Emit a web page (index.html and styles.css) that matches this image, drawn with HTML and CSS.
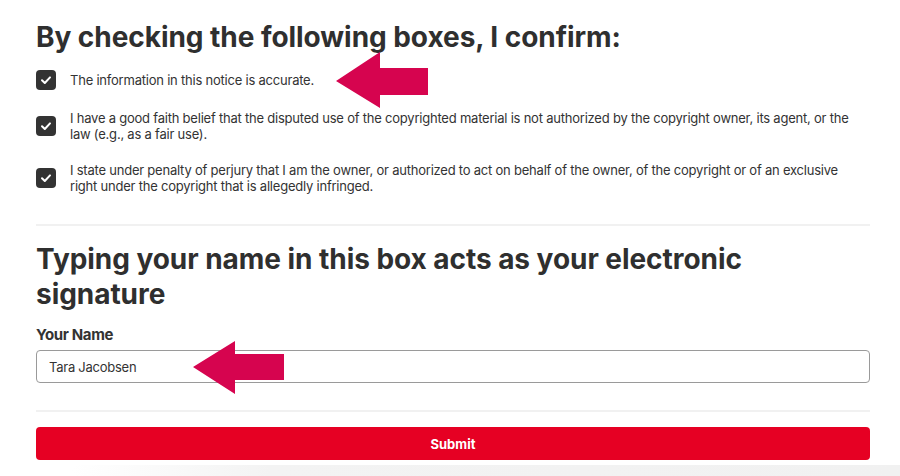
FILE: index.html
```html
<!DOCTYPE html>
<html lang="en">
<head>
<meta charset="utf-8">
<title>Counter notice confirmation</title>
<link rel="stylesheet" href="styles.css">
</head>
<body>
<main class="page">
  <h1 class="title title-first">By checking the following boxes, I confirm:</h1>
  <ul class="checks">
    <li class="check">
      <span class="box"><svg viewBox="0 0 20 20" width="20" height="20"><path d="M6 10.2 L8.8 13 L14 7.4" fill="none" stroke="#fff" stroke-width="2" stroke-linecap="round" stroke-linejoin="round"/></svg></span>
      <span class="check-text">The information in this notice is accurate.</span>
    </li>
    <li class="check">
      <span class="box"><svg viewBox="0 0 20 20" width="20" height="20"><path d="M6 10.2 L8.8 13 L14 7.4" fill="none" stroke="#fff" stroke-width="2" stroke-linecap="round" stroke-linejoin="round"/></svg></span>
      <span class="check-text">I have a good faith belief that the disputed use of the copyrighted material is not authorized by the copyright owner, its agent, or the law (e.g., as a fair use).</span>
    </li>
    <li class="check">
      <span class="box"><svg viewBox="0 0 20 20" width="20" height="20"><path d="M6 10.2 L8.8 13 L14 7.4" fill="none" stroke="#fff" stroke-width="2" stroke-linecap="round" stroke-linejoin="round"/></svg></span>
      <span class="check-text">I state under penalty of perjury that I am the owner, or authorized to act on behalf of the owner, of the copyright or of an exclusive right under the copyright that is allegedly infringed.</span>
    </li>
  </ul>
  <hr class="divider divider-first">
  <h2 class="title title-second">Typing your name in this box acts as your electronic signature</h2>
  <label class="field-label" for="name">Your Name</label>
  <input class="field" id="name" type="text" value="Tara Jacobsen">
  <hr class="divider divider-second">
  <button class="submit" type="button">Submit</button>
</main>
<div class="shade"></div>
<svg class="arrows" viewBox="0 0 900 476" width="900" height="476" aria-hidden="true">
  <polygon points="336,81 380,52 380,68 428,68 428,95 380,95 380,108" fill="#d6044f"/>
  <polygon points="193,367 235,341 235,354 284,354 284,380 235,380 235,394" fill="#d6044f"/>
</svg>
</body>
</html>
```
FILE: styles.css
```css
* { box-sizing: border-box; }
html, body { margin: 0; padding: 0; }
body {
  width: 900px;
  height: 476px;
  overflow: hidden;
  background: #fff;
  font-family: Inter, "Noto Sans", sans-serif;
  color: #333;
  position: relative;
}
.page {
  padding: 20px 30px 0 36px;
  width: 900px;
  display: flex;
  flex-direction: column;
}
.title {
  margin: 0;
  font-size: 28px;
  font-weight: 700;
  color: #2f2f2f;
  letter-spacing: -0.05px;
}
.title-first { line-height: 34px; }
.title-second { line-height: 35px; width: 760px; }
.checks {
  list-style: none;
  margin: 16px 0 0;
  padding: 0;
  display: flex;
  flex-direction: column;
  gap: 20px;
}
.check {
  display: flex;
  align-items: center;
  gap: 14px;
}
.box {
  flex: none;
  width: 20px;
  height: 20px;
  border-radius: 4px;
  background: #333;
  display: flex;
}
.check-text {
  font-size: 13px;
  line-height: 16px;
  letter-spacing: -0.22px;
  color: #333;
  width: 787px;
}
.divider {
  border: 0;
  height: 2px;
  background: #f1f1f1;
  margin: 0;
  width: 834px;
}
.divider-first { margin-top: 30px; margin-bottom: 16px; }
.field-label {
  margin-top: 14px;
  font-size: 15px;
  line-height: 18px;
  font-weight: 700;
  letter-spacing: -0.35px;
  color: #333;
}
.field {
  margin-top: 6px;
  width: 834px;
  height: 33px;
  border: 1px solid #9a9a9a;
  border-radius: 4px;
  padding: 0 12px;
  font-family: Inter, "Noto Sans", sans-serif;
  font-size: 13px;
  letter-spacing: -0.25px;
  color: #333;
  background: #fff;
  outline: none;
}
.divider-second { margin-top: 27px; }
.submit {
  margin-top: 15px;
  width: 834px;
  height: 33px;
  border: 0;
  border-radius: 4px;
  background: #e60023;
  color: #fff;
  font-family: Inter, "Noto Sans", sans-serif;
  font-size: 13px;
  font-weight: 700;
}
.shade {
  position: absolute;
  left: 0;
  right: 0;
  top: 465px;
  height: 11px;
  background: linear-gradient(to right, #fff 8%, #f3f3f3 30%, #f1f1f1 100%);
}
.arrows {
  position: absolute;
  left: 0;
  top: 0;
  pointer-events: none;
}
```
